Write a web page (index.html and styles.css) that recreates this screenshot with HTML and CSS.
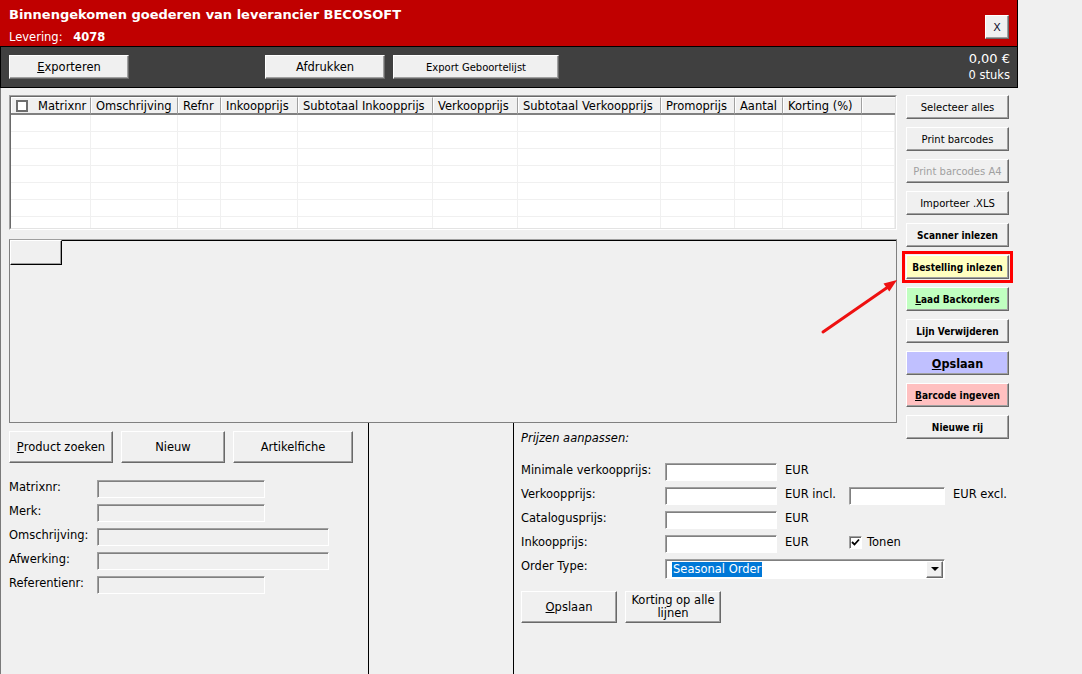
FILE: index.html
```html
<!DOCTYPE html>
<html lang="nl">
<head>
    <meta charset="UTF-8">
    <meta name="viewport" content="width=device-width, initial-scale=1.0">
    <title>Binnengekomen goederen</title>
    <link rel="stylesheet" href="styles.css">
</head>
<body>
    <div class="window">
        <header class="titlebar">
            <div class="titles">
                <h1 class="title">Binnengekomen goederen van leverancier BECOSOFT</h1>
                <div class="delivery">Levering: <strong>4078</strong></div>
            </div>
            <button class="btn btn-close">X</button>
        </header>
        <div class="toolbar">
            <button class="btn tool-btn"><u>E</u>xporteren</button>
            <button class="btn tool-btn tool-print">Afdrukken</button>
            <button class="btn tool-btn tool-birth">Export Geboortelijst</button>
            <div class="totals">
                <div class="total-amount">0,00 €</div>
                <div class="total-count">0 stuks</div>
            </div>
        </div>
    </div>

    <div class="content">
        <div class="top">
            <div class="lists">
                <div class="grid">
                    <div class="grid-inner">
                        <div class="grid-head">
                            <div><span class="head-check"></span>Matrixnr</div>
                            <div>Omschrijving</div>
                            <div>Refnr</div>
                            <div>Inkoopprijs</div>
                            <div>Subtotaal Inkoopprijs</div>
                            <div>Verkoopprijs</div>
                            <div>Subtotaal Verkoopprijs</div>
                            <div>Promoprijs</div>
                            <div>Aantal</div>
                            <div>Korting (%)</div>
                            <div class="filler"></div>
                        </div>
                        <div class="grid-row"><div></div><div></div><div></div><div></div><div></div><div></div><div></div><div></div><div></div><div></div><div></div></div>
                        <div class="grid-row"><div></div><div></div><div></div><div></div><div></div><div></div><div></div><div></div><div></div><div></div><div></div></div>
                        <div class="grid-row"><div></div><div></div><div></div><div></div><div></div><div></div><div></div><div></div><div></div><div></div><div></div></div>
                        <div class="grid-row"><div></div><div></div><div></div><div></div><div></div><div></div><div></div><div></div><div></div><div></div><div></div></div>
                        <div class="grid-row"><div></div><div></div><div></div><div></div><div></div><div></div><div></div><div></div><div></div><div></div><div></div></div>
                        <div class="grid-row"><div></div><div></div><div></div><div></div><div></div><div></div><div></div><div></div><div></div><div></div><div></div></div>
                        <div class="grid-row"><div></div><div></div><div></div><div></div><div></div><div></div><div></div><div></div><div></div><div></div><div></div></div>
                    </div>
                </div>
                <div class="tabpanel">
                    <div class="tabstrip">
                        <div class="tab"></div>
                        <div class="tabline"></div>
                    </div>
                </div>
            </div>

            <div class="actions">
                <button class="btn action">Selecteer alles</button>
                <button class="btn action">Print barcodes</button>
                <button class="btn action disabled">Print barcodes A4</button>
                <button class="btn action">Importeer .XLS</button>
                <button class="btn action strong">Scanner inlezen</button>
                <button class="btn action strong order">Bestelling inlezen</button>
                <button class="btn action strong backorders"><u>L</u>aad Backorders</button>
                <button class="btn action strong">Lijn Verwijderen</button>
                <button class="btn action strong save"><u>O</u>pslaan</button>
                <button class="btn action strong barcode"><u>B</u>arcode ingeven</button>
                <button class="btn action strong">Nieuwe rij</button>
            </div>
        </div>

        <div class="lower">
            <section class="product">
                <div class="product-actions">
                    <button class="btn big-btn"><u>P</u>roduct zoeken</button>
                    <button class="btn big-btn">Nieuw</button>
                    <button class="btn big-btn wide">Artikelfiche</button>
                </div>
                <div class="fields">
                    <div class="field"><label>Matrixnr:</label><span class="input"></span></div>
                    <div class="field"><label>Merk:</label><span class="input"></span></div>
                    <div class="field"><label>Omschrijving:</label><span class="input long"></span></div>
                    <div class="field"><label>Afwerking:</label><span class="input long"></span></div>
                    <div class="field"><label>Referentienr:</label><span class="input"></span></div>
                </div>
            </section>

            <section class="middle"></section>

            <section class="prices">
                <div class="prices-title">Prijzen aanpassen:</div>
                <div class="price-form">
                    <div class="price-row">
                        <label>Minimale verkoopprijs:</label>
                        <span class="input price-input"></span>
                        <span class="unit">EUR</span>
                    </div>
                    <div class="price-row">
                        <label>Verkoopprijs:</label>
                        <span class="input price-input"></span>
                        <span class="unit">EUR incl.</span>
                        <span class="input price-input small"></span>
                        <span class="unit">EUR excl.</span>
                    </div>
                    <div class="price-row">
                        <label>Catalogusprijs:</label>
                        <span class="input price-input"></span>
                        <span class="unit">EUR</span>
                    </div>
                    <div class="price-row">
                        <label>Inkoopprijs:</label>
                        <span class="input price-input"></span>
                        <span class="unit">EUR</span>
                        <span class="check">
                            <svg width="9" height="9" viewBox="0 0 9 9"><polyline points="1,4 3.5,6.5 8,1.5" fill="none" stroke="#000" stroke-width="1.8"/></svg>
                        </span>
                        <span class="check-label">Tonen</span>
                    </div>
                    <div class="price-row select-row">
                        <label>Order Type:</label>
                        <div class="input select">
                            <span class="select-value">Seasonal Order</span>
                            <span class="btn select-arrow"><span class="caret"></span></span>
                        </div>
                    </div>
                </div>
                <div class="price-actions">
                    <button class="btn big-btn price-btn"><u>O</u>pslaan</button>
                    <button class="btn big-btn price-btn two-line">Korting op alle lijnen</button>
                </div>
            </section>
        </div>
    </div>

    <svg class="pointer" width="82" height="60" viewBox="0 0 82 60">
        <line x1="3" y1="56" x2="68" y2="11" stroke="#ee1111" stroke-width="3" stroke-linecap="round"/>
        <polygon points="77,4 69.3,15.6 63.5,7.4" fill="#ee1111"/>
    </svg>
</body>
</html>
```

FILE: styles.css
```css
* {
    box-sizing: border-box;
}
body {
    position: relative;
    width: 1082px;
    height: 674px;
    margin: 0;
    overflow: hidden;
    background: #f0f0f0;
    color: #000;
    font-family: "DejaVu Sans", sans-serif;
    font-size: 11.5px;
}
.btn {
    display: flex;
    align-items: center;
    justify-content: center;
    padding: 0;
    font: inherit;
    color: #000;
    background: #f0f0f0;
    border: 1px solid;
    border-color: #fff #696969 #696969 #fff;
    box-shadow: inset -1px -1px 0 #a0a0a0;
}
.input {
    display: block;
    height: 18px;
    background: #f0f0f0;
    border: 1px solid;
    border-color: #a0a0a0 #fff #fff #a0a0a0;
    box-shadow: inset 1px 1px 0 #808080;
}

/* title bar + toolbar */
.window {
    width: 1018px;
    border-right: 1px solid #000;
}
.titlebar {
    display: flex;
    justify-content: space-between;
    align-items: flex-start;
    height: 47px;
    padding: 7px 8px 0 9px;
    background: #c00000;
    border-bottom: 1px solid #000;
    color: #fff;
}
.title {
    margin: 0;
    font-size: 13px;
    font-weight: bold;
    line-height: 16px;
}
.delivery {
    margin-top: 7px;
    line-height: 14px;
}
.delivery strong {
    margin-left: 7px;
}
.btn-close {
    width: 24px;
    height: 24px;
    margin-top: 8px;
    font-size: 11px;
    color: #101030;
}
.toolbar {
    display: flex;
    align-items: center;
    height: 41px;
    padding-left: 8px;
    background: #404040;
    border-left: 1px solid #000;
    border-bottom: 1px solid #000;
}
.tool-btn {
    width: 120px;
    height: 24px;
}
.tool-print {
    margin-left: 136px;
}
.tool-birth {
    width: 166px;
    margin-left: 8px;
    font-size: 10px;
}
.totals {
    margin-left: auto;
    padding-right: 7px;
    text-align: right;
    color: #fff;
}
.total-amount {
    font-size: 13px;
    line-height: 16px;
}
.total-count {
    line-height: 16px;
}

/* main area */
.content {
    height: 586px;
    border-left: 1px solid #7a7a7a;
}
.top {
    display: flex;
    align-items: flex-start;
    padding: 7px 0 0 8px;
}
.lists {
    width: 888px;
}
.grid {
    height: 135px;
    border: 1px solid;
    border-color: #a0a0a0 #fff #fff #a0a0a0;
}
.grid-inner {
    height: 100%;
    overflow: hidden;
    background: #fff;
    border: 1px solid;
    border-color: #696969 #e3e3e3 #e3e3e3 #696969;
}
.grid-head,
.grid-row {
    display: grid;
    grid-template-columns: 80px 87px 43px 77px 135px 85px 143px 74px 48px 79px 33px;
}
.grid-head > div {
    display: flex;
    align-items: center;
    height: 18px;
    padding: 1px 0 0 5px;
    overflow: hidden;
    white-space: nowrap;
    background: #f0f0f0;
    border-top: 1px solid #fff;
    border-right: 1px solid #a0a0a0;
    border-bottom: 2px solid #808080;
    box-shadow: inset 1px 0 0 #fff;
}
.grid-head > .filler {
    border-right: none;
}
.head-check {
    width: 12px;
    height: 12px;
    margin: -1px 10px 0 0;
    background: #fff;
    border: 2px solid #6d6d6d;
}
.grid-row > div {
    height: 17px;
    border-right: 1px solid #f0f0f0;
    border-bottom: 1px solid #f0f0f0;
}
.tabpanel {
    height: 184px;
    margin-top: 9px;
    border: 1px solid #808080;
    border-top-color: #a0a0a0;
}
.tabstrip {
    display: flex;
}
.tab {
    width: 52px;
    height: 25px;
    border: 1px solid;
    border-color: #fff #000 #000 #fff;
    box-shadow: inset -1px -1px 0 #a0a0a0;
}
.tabline {
    flex: 1;
    border-top: 1px solid #000;
}

/* side buttons */
.actions {
    display: flex;
    flex-direction: column;
    gap: 8px;
    width: 103px;
    margin: 0 0 -16px 9px;
}
.action {
    height: 24px;
    font-size: 10px;
}
.action.strong {
    font-family: "DejaVu Sans Condensed", "DejaVu Sans", sans-serif;
    font-stretch: condensed;
    font-weight: bold;
}
.action.disabled {
    color: #a0a0a0;
}
.order {
    background: #ffffc0;
    outline: 3px solid #ff0000;
    outline-offset: 1px;
}
.backorders {
    background: #c0ffc0;
}
.save {
    background: #c0c0ff;
    font-size: 12.5px;
}
.barcode {
    background: #ffc0c0;
}

/* lower panels */
.lower {
    display: grid;
    grid-template-columns: 368px 145px 1fr;
    height: 251px;
}
.product {
    padding: 8px 0 0 8px;
    border-right: 1px solid #000;
}
.middle {
    border-right: 1px solid #000;
}
.product-actions {
    display: flex;
    gap: 8px;
}
.big-btn {
    width: 104px;
    height: 32px;
}
.big-btn.wide {
    width: 120px;
}
.fields {
    display: flex;
    flex-direction: column;
    gap: 6px;
    margin-top: 17px;
}
.field,
.price-row {
    display: flex;
    align-items: flex-start;
    height: 18px;
}
.field label {
    width: 88px;
    line-height: 14px;
}
.field .input {
    width: 168px;
}
.field .input.long {
    width: 232px;
}
.prices {
    padding: 8px 0 0 7px;
}
.prices-title {
    font-style: italic;
    line-height: 14px;
}
.price-form {
    display: flex;
    flex-direction: column;
    gap: 6px;
    margin-top: 18px;
}
.price-row label {
    width: 144px;
    line-height: 14px;
}
.price-input {
    width: 112px;
    background: #fff;
}
.price-input.small {
    width: 96px;
}
.unit {
    width: 64px;
    margin-left: 8px;
    line-height: 14px;
}
.check {
    display: flex;
    align-items: center;
    justify-content: center;
    width: 13px;
    height: 13px;
    margin-top: 1px;
    background: #fff;
    border: 1px solid;
    border-color: #a0a0a0 #fff #fff #a0a0a0;
    box-shadow: inset 1px 1px 0 #696969;
}
.check-label {
    margin-left: 5px;
    line-height: 14px;
}
.select-row {
    height: 20px;
}
.select {
    display: flex;
    align-items: center;
    width: 280px;
    height: 20px;
    padding: 1px 1px 1px 2px;
    background: #fff;
}
.select-value {
    margin-left: 4px;
    padding: 0 1px;
    line-height: 15px;
    color: #fff;
    background: #0078d7;
}
.select-arrow {
    width: 17px;
    height: 17px;
    margin-left: auto;
}
.caret {
    width: 0;
    height: 0;
    border-left: 4px solid transparent;
    border-right: 4px solid transparent;
    border-top: 4px solid #000;
}
.price-actions {
    display: flex;
    gap: 8px;
    margin-top: 12px;
}
.price-btn {
    width: 96px;
}
.two-line {
    line-height: 13px;
    padding: 0 3px;
}

/* red annotation arrow */
.pointer {
    position: absolute;
    left: 820px;
    top: 276px;
}
```
